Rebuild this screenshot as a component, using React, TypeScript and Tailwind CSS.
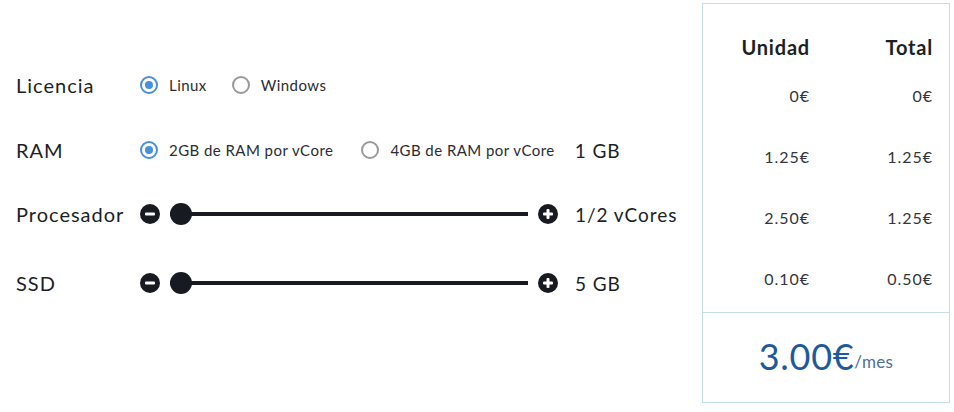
import React from "react"

const font = { fontFamily: "Lato, 'Noto Sans', sans-serif" }

function Radio({ checked, label }: { checked?: boolean; label: string }) {
  return (
    <label className="flex items-center gap-[11px] text-[15px] leading-none tracking-[0.03em] text-[#2a2d33]">
      <span
        className={
          checked
            ? "flex h-[18px] w-[18px] items-center justify-center rounded-full border-2 border-[#4a8fde]"
            : "flex h-[18px] w-[18px] items-center justify-center rounded-full border-2 border-[#9a9a9a]"
        }
      >
        {checked && <span className="h-[8px] w-[8px] rounded-full bg-[#4a8fde]" />}
      </span>
      {label}
    </label>
  )
}

function RoundBtn({ plus }: { plus?: boolean }) {
  return (
    <svg width="20" height="20" viewBox="0 0 20 20" className="shrink-0">
      <circle cx="10" cy="10" r="10" fill="#171a21" />
      <rect x="5" y="8.5" width="10" height="3" rx="1" fill="#fff" />
      {plus && <rect x="8.5" y="5" width="3" height="10" rx="1" fill="#fff" />}
    </svg>
  )
}

function Slider({ value }: { value: string }) {
  return (
    <div className="flex items-center">
      <RoundBtn />
      <div className="relative ml-[10px] flex h-[22px] w-[358px] items-center">
        <div className="h-[4px] w-full bg-[#171a21]" />
        <div className="absolute left-0 top-0 h-[22px] w-[22px] rounded-full bg-[#171a21]" />
      </div>
      <div className="ml-[10px]">
        <RoundBtn plus />
      </div>
      <span className="ml-[17px] text-[19px] leading-none tracking-[0.05em] text-[#1c1f26]">{value}</span>
    </div>
  )
}

const rows = [
  ["0€", "0€"],
  ["1.25€", "1.25€"],
  ["2.50€", "1.25€"],
  ["0.10€", "0.50€"],
]

const label = "w-[124px] text-[20px] leading-none tracking-[0.05em]"

export default function App() {
  return (
    <div className="flex h-[412px] w-[954px] bg-white text-[#1c1f26]" style={font}>
      {/* configurador */}
      <div className="w-[702px] pl-4 pt-[74px]">
        <div className="flex h-[22px] items-center">
          <span className={label}>Licencia</span>
          <div className="flex items-center gap-[25px]">
            <Radio checked label="Linux" />
            <Radio label="Windows" />
          </div>
        </div>
        <div className="mt-[43px] flex h-[22px] items-center">
          <span className={label}>RAM</span>
          <div className="flex items-center gap-[28px]">
            <Radio checked label="2GB de RAM por vCore" />
            <Radio label="4GB de RAM por vCore" />
          </div>
          <span className="ml-[20px] text-[19px] leading-none tracking-[0.05em]">1 GB</span>
        </div>
        <div className="mt-[42px] flex h-[22px] items-center">
          <span className={label}>Procesador</span>
          <Slider value="1/2 vCores" />
        </div>
        <div className="mt-[47px] flex h-[22px] items-center">
          <span className={label}>SSD</span>
          <Slider value="5 GB" />
        </div>
      </div>

      {/* resumen */}
      <div className="mt-[3px] flex h-[400px] w-[248px] flex-col border border-[#c4dde6]">
        <div className="h-[308px] pr-[16px] pt-[31px]">
          <div className="grid grid-cols-[1fr_123px] text-right text-[20px] font-bold leading-[24px] tracking-[0.04em]">
            <span>Unidad</span>
            <span>Total</span>
          </div>
          {rows.map((r, i) => (
            <div
              key={i}
              className={
                i === 0
                  ? "mt-[27px] grid grid-cols-[1fr_123px] text-right text-[16px] leading-[20px] tracking-[0.06em] text-[#33363c]"
                  : "mt-[41px] grid grid-cols-[1fr_123px] text-right text-[16px] leading-[20px] tracking-[0.06em] text-[#33363c]"
              }
            >
              <span>{r[0]}</span>
              <span>{r[1]}</span>
            </div>
          ))}
        </div>
        <div className="flex flex-1 items-center justify-center border-t border-[#c4dde6] pb-[4px]">
          <span className="text-[36px] leading-none tracking-[0.02em] text-[#1d5a9c]">3.00€</span>
          <span className="mt-[12px] text-[17px] leading-none tracking-[0.02em] text-[#4f6f95]">/mes</span>
        </div>
      </div>
    </div>
  )
}
